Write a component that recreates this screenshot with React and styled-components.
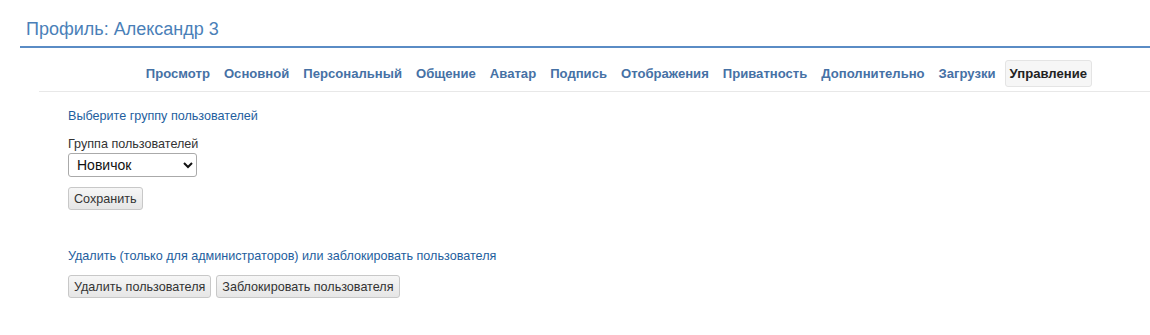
import React, { useState } from 'react'
import styled, { createGlobalStyle } from 'styled-components'

const GlobalStyle = createGlobalStyle`
  body {
    margin: 0;
    background: #fff;
    font-family: "Liberation Sans", Arial, sans-serif;
    color: #333;
  }
`

const Page = styled.div`
  padding: 18px 0 0 20px;
`

const Title = styled.h2`
  margin: 0;
  padding: 0 0 6px 6px;
  font-size: 18px;
  font-weight: normal;
  color: #4a7fb8;
  border-bottom: 2px solid #5a8cc5;
  line-height: 22px;
`

const Body = styled.div`
  margin-left: 19px;
`

const Tabs = styled.nav`
  display: flex;
  justify-content: flex-end;
  align-items: center;
  gap: 4px;
  padding: 12px 58px 4px 0;
  border-bottom: 1px solid #e8e8e8;
`

const Tab = styled.a`
  display: block;
  padding: 4px 4px;
  font-size: 13.1px;
  font-weight: bold;
  line-height: 17px;
  text-decoration: none;
  cursor: pointer;
  border-radius: 3px;
  border: 1px solid ${p => (p.$active ? '#e4e4e4' : 'transparent')};
  background: ${p => (p.$active ? '#f6f6f6' : 'transparent')};
  color: ${p => (p.$active ? '#222' : '#4671a5')};
`

const Content = styled.div`
  padding: 16px 0 0 29px;
  font-size: 12.6px;
`

const SectionTitle = styled.div`
  color: #1e5e9e;
  line-height: 16px;
  margin-top: ${p => p.$mt || 0}px;
  margin-bottom: ${p => p.$mb}px;
`

const Label = styled.label`
  display: block;
  line-height: 16px;
  margin-bottom: 1px;
`

const Select = styled.select`
  display: block;
  width: 129px;
  height: 24px;
  font-family: inherit;
  font-size: 14px;
  padding: 0 4px;
  border: 1px solid #aaa;
  border-radius: 3px;
  background: #fff;
  color: #111;
`

const Button = styled.button`
  height: 23px;
  padding: 0 5px;
  font-family: inherit;
  font-size: 12.6px;
  color: #333;
  border: 1px solid #c8c8c8;
  border-radius: 3px;
  background: linear-gradient(#f6f6f6, #e6e6e6);
  cursor: pointer;
`

const Row = styled.div`
  display: flex;
  gap: 5px;
  margin-top: ${p => p.$mt || 0}px;
`

const tabs = [
  'Просмотр', 'Основной', 'Персональный', 'Общение', 'Аватар', 'Подпись',
  'Отображения', 'Приватность', 'Дополнительно', 'Загрузки', 'Управление'
]

const App = () => {
  const [group, setGroup] = useState('novice')

  return (
    <>
      <GlobalStyle />
      <Page>
        <Title>Профиль: Александр 3</Title>
        <Body>
          <Tabs>
            {tabs.map(t => (
              <Tab key={t} $active={t === 'Управление'}>{t}</Tab>
            ))}
          </Tabs>
          <Content>
            <SectionTitle $mb={12}>Выберите группу пользователей</SectionTitle>
            <Label>Группа пользователей</Label>
            <Select value={group} onChange={e => setGroup(e.target.value)}>
              <option value="novice">Новичок</option>
              <option value="user">Пользователь</option>
              <option value="mod">Модератор</option>
            </Select>
            <Row $mt={10}>
              <Button>Сохранить</Button>
            </Row>
            <SectionTitle $mt={38} $mb={11}>
              Удалить (только для администраторов) или заблокировать пользователя
            </SectionTitle>
            <Row>
              <Button>Удалить пользователя</Button>
              <Button>Заблокировать пользователя</Button>
            </Row>
          </Content>
        </Body>
      </Page>
    </>
  )
}

export default App
